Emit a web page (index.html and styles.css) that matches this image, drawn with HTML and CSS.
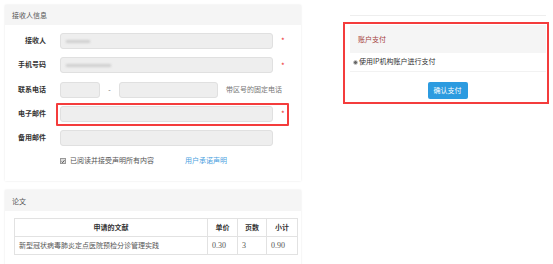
FILE: index.html
```html
<!DOCTYPE html>
<html>
	<head>
		<meta charset="UTF-8">
		<title>订单确认</title>
		<link rel="stylesheet" href="styles.css">
	</head>
	<body>
		<div class="page">
			<div class="main">
				<div class="panel">
					<div class="panel-head">接收人信息</div>
					<form class="form" action="" method="post">
						<div class="row"><label>接收人</label><div class="input wide"><span class="blur" style="width:24px"></span></div><span class="req">*</span></div>
						<div class="row"><label>手机号码</label><div class="input wide"><span class="blur" style="width:45px"></span></div><span class="req">*</span></div>
						<div class="row"><label>联系电话</label><div class="input short"></div><span class="dash">-</span><div class="input mid"></div><span class="tip">带区号的固定电话</span></div>
						<div class="row"><label>电子邮件</label><div class="input wide"></div><span class="req">*</span><span class="mark"></span></div>
						<div class="row"><label>备用邮件</label><div class="input wide"></div></div>
						<div class="agree">
							<span class="check"><svg width="5" height="5" viewBox="0 0 5 5"><path d="M0.8 2.6 L2 3.8 L4.3 1" fill="none" stroke="#333" stroke-width="1"/></svg></span>
							<span class="agree-text">已阅读并接受声明所有内容</span>
							<a href="">用户承诺声明</a>
						</div>
					</form>
				</div>
				<div class="panel paper">
					<div class="panel-head">论文</div>
					<div class="paper-body">
						<table class="list">
							<tr><th class="c-title">申请的文献</th><th class="c-price">单价</th><th class="c-pages">页数</th><th class="c-sum">小计</th></tr>
							<tr><td>新型冠状病毒肺炎定点医院预检分诊管理实践</td><td class="num">0.30</td><td class="num">3</td><td class="num">0.90</td></tr>
						</table>
					</div>
				</div>
			</div>
			<div class="side">
				<div class="topline"></div>
				<div class="paybox">
					<div class="pay-panel">
						<div class="pay-head">账户支付</div>
						<div class="pay-body"><span class="radio"></span>使用IP机构账户进行支付</div>
					</div>
					<div class="pay-action"><button type="button" class="btn">确认支付</button></div>
				</div>
			</div>
		</div>
	</body>
</html>
```

FILE: styles.css
```css
body{
	margin: 0;
	font: 7px/1.4 "Noto Sans CJK SC", sans-serif;
	color: #333;
	background: #fff;
}
.page{
	display: flex;
	align-items: flex-start;
	padding: 5px 0 0 5px;
}
.main{
	width: 296px;
}
.panel{
	background: #fff;
	box-shadow: 0 0 2px rgba(0,0,0,.1);
}
.panel-head{
	height: 20px;
	line-height: 20px;
	padding-left: 7px;
	background: #f5f5f5;
	color: #555;
}
.form{
	margin: 0;
	padding: 8px 0 13px;
}
.row{
	position: relative;
	display: flex;
	align-items: center;
	height: 16px;
	margin-bottom: 8.25px;
}
.row label{
	width: 41px;
	margin-right: 14px;
	text-align: right;
	font-weight: bold;
	color: #333;
}
.input{
	box-sizing: border-box;
	display: flex;
	align-items: center;
	height: 16px;
	padding-left: 5px;
	background: #eee;
	border: 1px solid #e0e0e0;
	border-radius: 3px;
}
.wide{
	width: 213px;
}
.short{
	width: 40px;
}
.mid{
	width: 99px;
}
.dash{
	width: 19px;
	text-align: center;
	color: #666;
}
.tip{
	margin-left: 8px;
	color: #777;
}
.req{
	margin-left: 8px;
	color: #e33;
	font-size: 8px;
}
.blur{
	display: inline-block;
	height: 3px;
	background: #d0d0d0;
	filter: blur(1px);
}
.mark{
	position: absolute;
	left: 51px;
	top: -3px;
	box-sizing: border-box;
	width: 233px;
	height: 23px;
	border: 2px solid #f43c3c;
	border-radius: 1px;
}
.agree{
	display: flex;
	align-items: center;
	height: 14px;
	margin-top: 1px;
	padding-left: 55px;
}
.check{
	box-sizing: border-box;
	display: inline-flex;
	width: 6px;
	height: 6px;
	background: #ddd;
	border: 0.5px solid #999;
}
.agree-text{
	margin-left: 4px;
	width: 115px;
	color: #555;
}
.agree a{
	color: #4a9fe0;
	text-decoration: none;
}
.paper{
	margin-top: 9px;
}
.paper .panel-head{
	height: 21px;
	line-height: 22px;
}
.paper-body{
	padding: 7px 0 12px 9px;
}
.list{
	width: 284px;
	border-collapse: collapse;
}
.list th,.list td{
	height: 17px;
	padding: 0 4px;
	border: 1px solid #e2e2e2;
}
.list th{
	font-weight: bold;
	text-align: center;
}
.list td{
	color: #555;
	text-align: left;
}
.list .num{
	font-family: "Liberation Serif", serif;
	font-size: 8px;
	color: #555;
}
.c-price{
	width: 21px;
}
.c-pages{
	width: 20px;
}
.c-sum{
	width: 22px;
}
.side{
	width: 206px;
	margin-left: 42px;
}
.topline{
	width: 196px;
	height: 1px;
	margin: 10px 0 0 7px;
	background: #eee;
}
.paybox{
	box-sizing: border-box;
	height: 82px;
	margin-top: 6px;
	padding: 1px 1px 0 5px;
	border: 2px solid #f43c3c;
}
.pay-panel{
	background: #fff;
	border-bottom: 1px solid #f2f2f2;
}
.pay-head{
	height: 28px;
	line-height: 28px;
	padding-left: 8px;
	background: #f5f5f5;
	color: #a4423e;
}
.pay-body{
	display: flex;
	align-items: center;
	height: 18px;
	padding-left: 3px;
	color: #333;
}
.radio{
	box-sizing: border-box;
	width: 5px;
	height: 5px;
	margin-right: 1px;
	border-radius: 50%;
	background: #666;
	border: 1px solid #ccc;
}
.pay-action{
	display: flex;
	justify-content: center;
	padding-top: 10px;
	padding-right: 1px;
}
.btn{
	width: 40px;
	height: 17px;
	padding: 0;
	font: 7px/17px "Noto Sans CJK SC", sans-serif;
	color: #fff;
	background: #2c9be0;
	border: none;
	border-radius: 2px;
}
```
